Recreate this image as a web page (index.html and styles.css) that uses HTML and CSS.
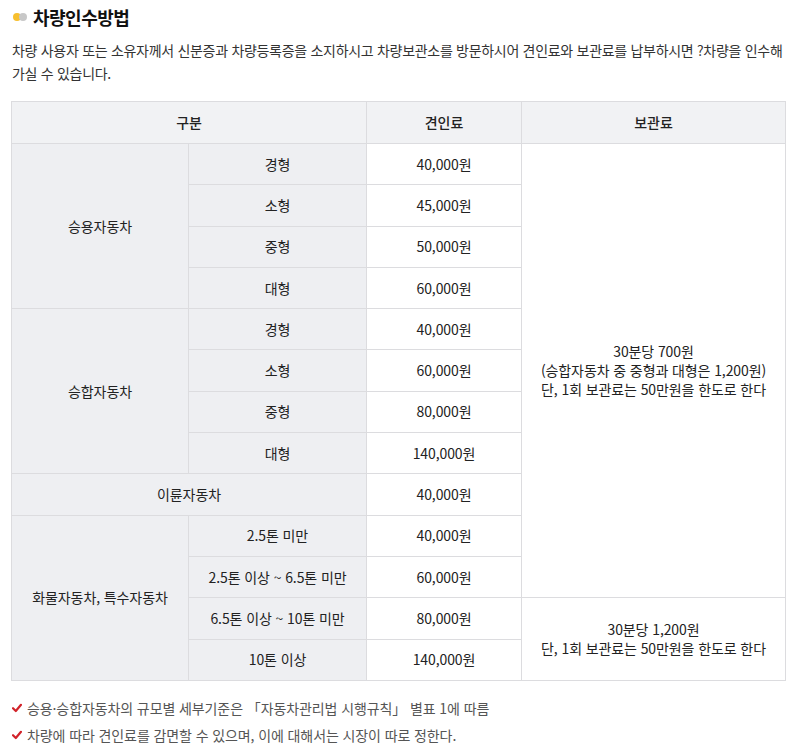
FILE: index.html
```html
<!DOCTYPE html>
<html lang="ko">
<head>
<meta charset="utf-8">
<link rel="stylesheet" href="styles.css">
</head>
<body>
<div class="page">
  <h2 class="title"><span class="dots"><span class="dot dot-y"></span><span class="dot dot-g"></span></span>차량인수방법</h2>
  <p class="desc">차량 사용자 또는 소유자께서 신분증과 차량등록증을 소지하시고 차량보관소를 방문하시어 견인료와 보관료를 납부하시면 ?차량을 인수해 가실 수 있습니다.</p>
  <table class="fee">
    <colgroup>
      <col class="c1"><col class="c2"><col class="c3"><col class="c4">
    </colgroup>
    <thead>
      <tr><th colspan="2">구분</th><th>견인료</th><th>보관료</th></tr>
    </thead>
    <tbody>
      <tr><td class="lab" rowspan="4">승용자동차</td><td class="lab">경형</td><td>40,000원</td>
        <td rowspan="11">30분당 700원<br>(승합자동차 중 중형과 대형은 1,200원)<br>단, 1회 보관료는 50만원을 한도로 한다</td></tr>
      <tr><td class="lab">소형</td><td>45,000원</td></tr>
      <tr><td class="lab">중형</td><td>50,000원</td></tr>
      <tr><td class="lab">대형</td><td>60,000원</td></tr>
      <tr><td class="lab" rowspan="4">승합자동차</td><td class="lab">경형</td><td>40,000원</td></tr>
      <tr><td class="lab">소형</td><td>60,000원</td></tr>
      <tr><td class="lab">중형</td><td>80,000원</td></tr>
      <tr><td class="lab">대형</td><td>140,000원</td></tr>
      <tr><td class="lab" colspan="2">이륜자동차</td><td>40,000원</td></tr>
      <tr><td class="lab" rowspan="4">화물자동차, 특수자동차</td><td class="lab">2.5톤 미만</td><td>40,000원</td></tr>
      <tr><td class="lab">2.5톤 이상 ~ 6.5톤 미만</td><td>60,000원</td></tr>
      <tr><td class="lab">6.5톤 이상 ~ 10톤 미만</td><td>80,000원</td>
        <td rowspan="2">30분당 1,200원<br>단, 1회 보관료는 50만원을 한도로 한다</td></tr>
      <tr><td class="lab">10톤 이상</td><td>140,000원</td></tr>
    </tbody>
  </table>
  <ul class="notes">
    <li><svg class="chk" viewBox="0 0 10 10" width="10" height="10"><path d="M1 5.2 L3.8 8 L9 1.8" fill="none" stroke="#d2232a" stroke-width="2.2" stroke-linecap="round" stroke-linejoin="round"/></svg>승용·승합자동차의 규모별 세부기준은 「자동차관리법 시행규칙」 별표 1에 따름</li>
    <li><svg class="chk" viewBox="0 0 10 10" width="10" height="10"><path d="M1 5.2 L3.8 8 L9 1.8" fill="none" stroke="#d2232a" stroke-width="2.2" stroke-linecap="round" stroke-linejoin="round"/></svg>차량에 따라 견인료를 감면할 수 있으며, 이에 대해서는 시장이 따로 정한다.</li>
  </ul>
</div>
</body>
</html>
```

FILE: styles.css
```css
html, body {
  margin: 0;
  padding: 0;
  background: #fff;
}
body {
  font-family: "Noto Sans CJK KR", "Noto Sans", sans-serif;
  color: #222;
}
.page {
  padding: 4px 10px 0 11px;
}
.title {
  display: flex;
  align-items: center;
  margin: 0;
  height: 26px;
  font-size: 18px;
  font-weight: 700;
  color: #111;
  letter-spacing: -0.5px;
}
.dots {
  display: inline-flex;
  margin: 0 6px 0 2px;
}
.dot {
  width: 8px;
  height: 8px;
  border-radius: 50%;
}
.dot-y { background: #f7bf2e; }
.dot-g { background: #c8c8c8; margin-left: -2px; }
.desc {
  margin: 9px 0 0 1px;
  font-size: 14px;
  line-height: 23px;
  color: #333;
  letter-spacing: -0.3px;
}
.fee {
  margin-top: 16px;
  width: 774px;
  border-collapse: collapse;
  table-layout: fixed;
  font-size: 14px;
  color: #222;
  letter-spacing: -0.1px;
}
.c1 { width: 177px; }
.c2 { width: 178px; }
.c3 { width: 155px; }
.c4 { width: 264px; }
.fee th, .fee td {
  border: 1px solid #dcdcdf;
  text-align: center;
  vertical-align: middle;
  padding: 0;
  line-height: 19px;
}
.fee th {
  height: 41px;
  background: #f1f2f4;
  font-weight: 500;
}
.fee td {
  height: 40.3px;
  background: #fff;
}
.fee td.lab {
  background: #eeeff2;
}
.notes {
  list-style: none;
  margin: 14px 0 0 0;
  padding: 0;
  font-size: 14px;
  color: #555;
  letter-spacing: -0.1px;
}
.notes li {
  display: flex;
  align-items: center;
  height: 27px;
}
.chk {
  margin: 0 5px 0 1px;
  flex: none;
}
```
